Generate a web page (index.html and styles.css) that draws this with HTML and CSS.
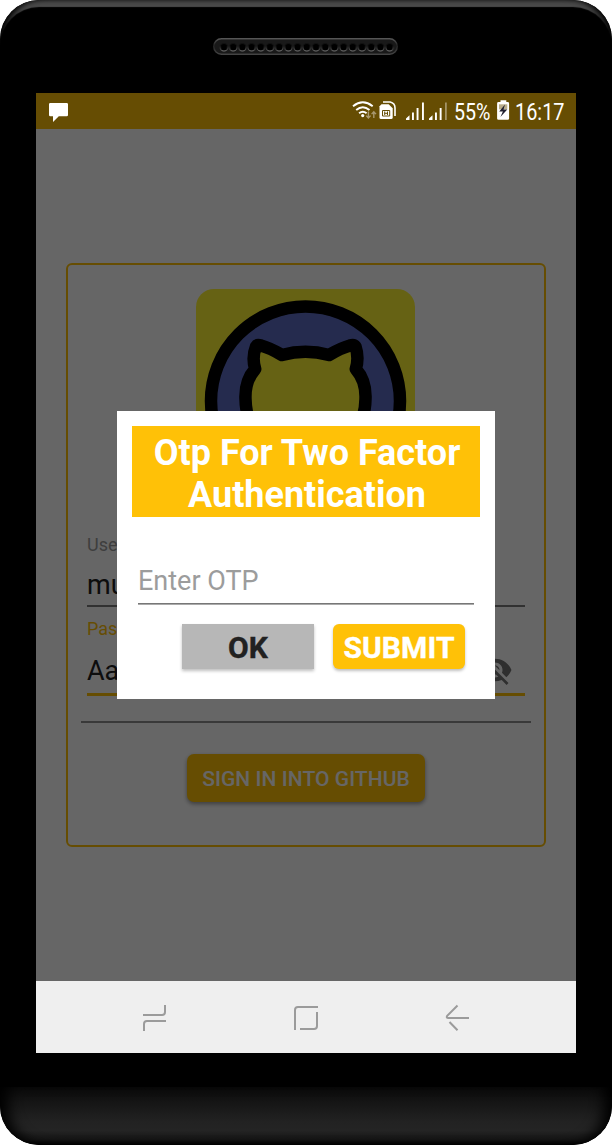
FILE: index.html
```html
<!DOCTYPE html>
<html lang="en">
<head>
<meta charset="utf-8">
<title>Two factor sign in</title>
<link rel="stylesheet" href="styles.css">
</head>
<body>
<div class="phone">
  <div class="phone-top">
    <svg class="speaker" width="185" height="17" viewBox="0 0 185 17">
      <defs>
        <linearGradient id="rim" x1="0" y1="0" x2="0" y2="1"><stop offset="0" stop-color="#555"/><stop offset=".45" stop-color="#222"/><stop offset="1" stop-color="#444"/></linearGradient>
        <linearGradient id="hole" x1="0" y1="0" x2="0" y2="1"><stop offset=".3" stop-color="#111"/><stop offset="1" stop-color="#777"/></linearGradient>
        <pattern id="holes" x="6.4" y="0" width="9.2" height="17" patternUnits="userSpaceOnUse"><circle cx="4.6" cy="9.2" r="3.7" fill="#000" stroke="url(#hole)" stroke-width="1"/></pattern>
      </defs>
      <rect x=".75" y=".75" width="183.5" height="15.5" rx="7.75" fill="#191919" stroke="url(#rim)" stroke-width="1.5"/>
      <rect x="6.4" width="174.8" height="17" fill="url(#holes)"/>
    </svg>
  </div>
  <div class="screen">
    <header class="status">
      <svg class="chat" width="20" height="20" viewBox="0 0 20 20"><path d="M1.3 0h16.400a1.300 1.300 0 0 1 1.300 1.300v10.700a1.300 1.300 0 0 1-1.300 1.300H9.800L4 19v-5.700H1.300A1.300 1.300 0 0 1 0 12V1.300A1.300 1.300 0 0 1 1.300 0z" fill="#fff"/></svg>
      <svg class="status-info" width="224" height="36" viewBox="352 93 224 36">
        <g fill="none" stroke="#fff" stroke-width="1.9">
          <path d="M353 106.2Q362.8 98.3 372.7 106.2M356.2 109.9Q362.8 104.4 369.5 109.9M359.1 113.3Q362.8 110.2 366.6 113.3"/>
        </g>
        <circle cx="362.7" cy="115.6" r="1.6" fill="#fff"/>
        <path d="M368.4 111.5v6.3m-2.2-2.2 2.2 2.4 2.2-2.4M373.8 118v-6m-2.2 2.1 2.2-2.4 2.2 2.4" fill="none" stroke="#a89870" stroke-width="1.4"/>
        <path d="M383 102h7.2q4.800 1.200 4.800 6v8" fill="none" stroke="#fff" stroke-width="1.6"/>
        <path d="M381.500 104.200h7.200l4 4v9.200q0 1.600-1.600 1.600h-10q-1.600 0-1.600-1.600v-11.200z" fill="#fff"/>
        <path d="M382.500 110.500h7.200v5.500h-7.200zM384.700 111.500v3.500m2.800-3.500v3.500M384.700 113.300h2.800" fill="none" stroke="#664d03" stroke-width="1"/>
        <g fill="#fff">
          <path d="M406 120v-1.500l3.500-3.200v4.700zM412 112.500h1.900V120H412zM416.600 108h1.900v12h-1.900zM422 102.500h1.900V120H422z"/>
          <path d="M429 120v-1.500l3.500-3.200v4.700zM435 112.500h1.900V120H435zM439.700 108h1.900v12h-1.900z"/>
          <path d="M445 102.500h1.800V120H445z" opacity=".4"/>
          <path d="M500.500 102v-1.700h5.800v1.700h1.400q1.400 0 1.400 1.400v15q0 1.400-1.400 1.400h-9.200q-1.400 0-1.400-1.400v-15q0-1.400 1.400-1.400z"/>
        </g>
        <path d="M499 104.300h8.300v5H499z" fill="#baae8c"/>
        <path d="m505 104.500-5.800 7h3.700l-2.500 5.500 6.900-7.500h-3.800z" fill="#202030"/>
        <text x="454" y="120.2" textLength="36.5" lengthAdjust="spacingAndGlyphs" class="status-text">55%</text>
        <text x="515" y="120.2" textLength="49.500" lengthAdjust="spacingAndGlyphs" class="status-text">16:17</text>
      </svg>
    </header>
    <main class="content">
      <section class="card">
        <svg class="logo" width="219" height="219" viewBox="0 0 219 219">
          <rect width="219" height="219" rx="18" fill="#fff532"/>
          <circle cx="109.5" cy="112" r="94.500" fill="#5e6cc4" stroke="#000" stroke-width="12.500"/>
          <path d="M49.500 110C49 98 53 87 59.200 80C56.800 72 57 65 60 57.500Q61.300 55.200 65 56.500Q74 59 86 66Q109.500 59.500 133 66Q145 59 154 56.500Q157.700 55.200 159.500 57.500C162 65 162.200 72 159.800 80C166 87 170 98 169.500 110C169 139 153 152 133 155V198H86V155C66 152 50 139 49.500 110Z" fill="#fff532" stroke="#000" stroke-width="12.500" stroke-linejoin="round"/>
        </svg>
        <div class="field">
          <span class="label">Username</span>
          <span class="value">mu</span>
        </div>
        <div class="field field-active">
          <span class="label">Password</span>
          <span class="value">Aa</span>
          <svg class="eye" width="36" height="36" viewBox="0 0 24 24"><path fill="#757575" d="M12 7c2.760 0 5 2.240 5 5 0 .650-.130 1.260-.360 1.830l2.920 2.920c1.510-1.260 2.700-2.890 3.430-4.750-1.730-4.390-6-7.500-11-7.500-1.400 0-2.740.250-3.980.700l2.160 2.160C10.740 7.130 11.350 7 12 7zM2 4.270l2.280 2.280.460.460C3.080 8.300 1.780 10.020 1 12c1.730 4.390 6 7.500 11 7.500 1.550 0 3.030-.300 4.380-.840l.420.420L19.730 22 21 20.730 3.270 3 2 4.270zM7.530 9.800l1.550 1.550c-.050.210-.080.430-.080.650 0 1.660 1.340 3 3 3 .220 0 .440-.030.650-.080l1.550 1.550c-.670.330-1.410.530-2.200.530-2.760 0-5-2.240-5-5 0-.790.200-1.530.530-2.200zm4.310-.780l3.150 3.150.020-.160c0-1.660-1.340-3-3-3l-.170.010z"/></svg>
        </div>
        <div class="divider"></div>
        <button class="signin">SIGN IN INTO GITHUB</button>
      </section>
      <div class="scrim"></div>
      <section class="dialog">
        <h1 class="dialog-title">Otp For Two Factor Authentication</h1>
        <div class="otp">Enter OTP</div>
        <div class="rule"></div>
        <div class="actions">
          <button class="btn btn-ok">OK</button>
          <button class="btn btn-submit">SUBMIT</button>
        </div>
      </section>
    </main>
    <nav class="nav">
      <svg width="540" height="72" viewBox="36 981 540 72" fill="none" stroke="#9b9b9b" stroke-width="2">
        <path d="M165 1005v7q0 3-3 3h-19M144 1031v-7q0-3 3-3h19"/>
        <path d="M295 1030v-20q0-3 3-3h20M317 1012v14q0 3-3 3h-14"/>
        <path d="m457.500 1005.500-10.300 10.300q-1.200 2.200 1.200 2.200H469M449.500 1022l8 8.300"/>
      </svg>
    </nav>
  </div>
  <div class="phone-bottom"></div>
</div>
</body>
</html>
```
FILE: styles.css
```css
* { box-sizing: border-box; }
body { margin: 0; background: #fff; font-family: Roboto, "Liberation Sans", sans-serif; }
button { font-family: inherit; border: 0; padding: 0; }
svg { display: block; }
.phone {
  width: 612px; height: 1145px; overflow: hidden;
  display: flex; flex-direction: column; align-items: center;
  border-radius: 39px; background: #000;
}
.phone-top {
  width: 612px; height: 93px; padding: 38px 1px 0 0;
  display: flex; justify-content: center; align-items: flex-start;
  border-radius: 39px 39px 0 0;
  box-shadow: inset 7px 0 6px -2px #000, inset -7px 0 6px -2px #000, inset 0 7px 1px #4b4b4b;
}
.speaker { margin-right: 1px; }
.screen { width: 540px; height: 960px; display: flex; flex-direction: column; }
.status {
  height: 36px; padding-left: 13px; background: #664d03;
  display: flex; justify-content: space-between; align-items: flex-start;
}
.chat { margin-top: 10px; }
.status-text { font-size: 23.5px; fill: #fff; }
.content { position: relative; height: 852px; padding: 134px 30px 0; background: #fff; }
.card {
  height: 584px; padding: 24px 13px 0;
  display: flex; flex-direction: column; align-items: center;
  border: 2px solid #ffc107; border-radius: 6px;
}
.logo { flex: none; margin-right: 1px; }
.field {
  position: relative; width: 438px; height: 73px; margin-top: 26px;
  display: flex; flex-direction: column; gap: 14px;
  border-bottom: 2px solid #7a7a7a; flex: none;
}
.field-active { height: 78px; margin-top: 11px; gap: 16px; border-bottom: 3px solid #ffc107; }
.label { font-size: 18px; line-height: 21px; color: #9c9c9c; }
.field-active .label { color: #ffc107; }
.value { font-size: 27px; line-height: 32px; color: #212121; }
.eye { position: absolute; right: 12px; top: 34px; }
.divider { width: 450px; height: 2px; margin-top: 25px; background: #8f8f8f; flex: none; }
.signin {
  width: 238px; height: 48px; margin-top: 31px; padding-top: 2px; flex: none;
  border-radius: 7px; background: #ffc107; color: #fff;
  font-size: 21px; font-weight: 500; letter-spacing: .05px; box-shadow: 0 2px 4px rgba(0,0,0,.4);
}
.scrim { position: absolute; inset: 0; background: rgba(0,0,0,.6); }
.dialog {
  position: absolute; left: 81px; top: 282px; width: 378px; height: 288px;
  padding: 15px; background: #fff;
}
.dialog-title {
  margin: 0; height: 91px; padding: 6px 14px 0 16px; background: #ffc107; color: #fff;
  font-size: 36px; line-height: 42px; font-weight: 700; text-align: center;
}
.otp {
  height: 86px; margin: 0 6px; padding-top: 48px;
  font-size: 27px; line-height: 32px; color: #9c9c9c;
}
.rule { height: 2px; margin: 0 6px; background: linear-gradient(#777 50%, #aaa 50%); }
.actions { display: flex; justify-content: flex-end; gap: 19px; padding: 19px 15px 0 0; }
.btn {
  width: 132px; height: 45px; padding-top: 2px; font-size: 30px; font-weight: 700;
  -webkit-text-stroke: .4px currentColor; letter-spacing: .1px;
  box-shadow: 0 2px 3px rgba(0,0,0,.25);
}
.btn-ok { background: #b7b7b7; color: #212121; }
.btn-submit { background: #ffc107; color: #fff; border-radius: 6px; }
.nav { height: 72px; background: #efefef; }
.phone-bottom {
  width: 612px; height: 58px; margin-top: 34px;
  border-radius: 0 0 39px 39px;
  background: linear-gradient(#0b0b0b, #222 60%, #242424 75%, #161616 90%, #000);
  box-shadow: inset 14px 0 14px -6px #000, inset -14px 0 14px -6px #000;
}
```
